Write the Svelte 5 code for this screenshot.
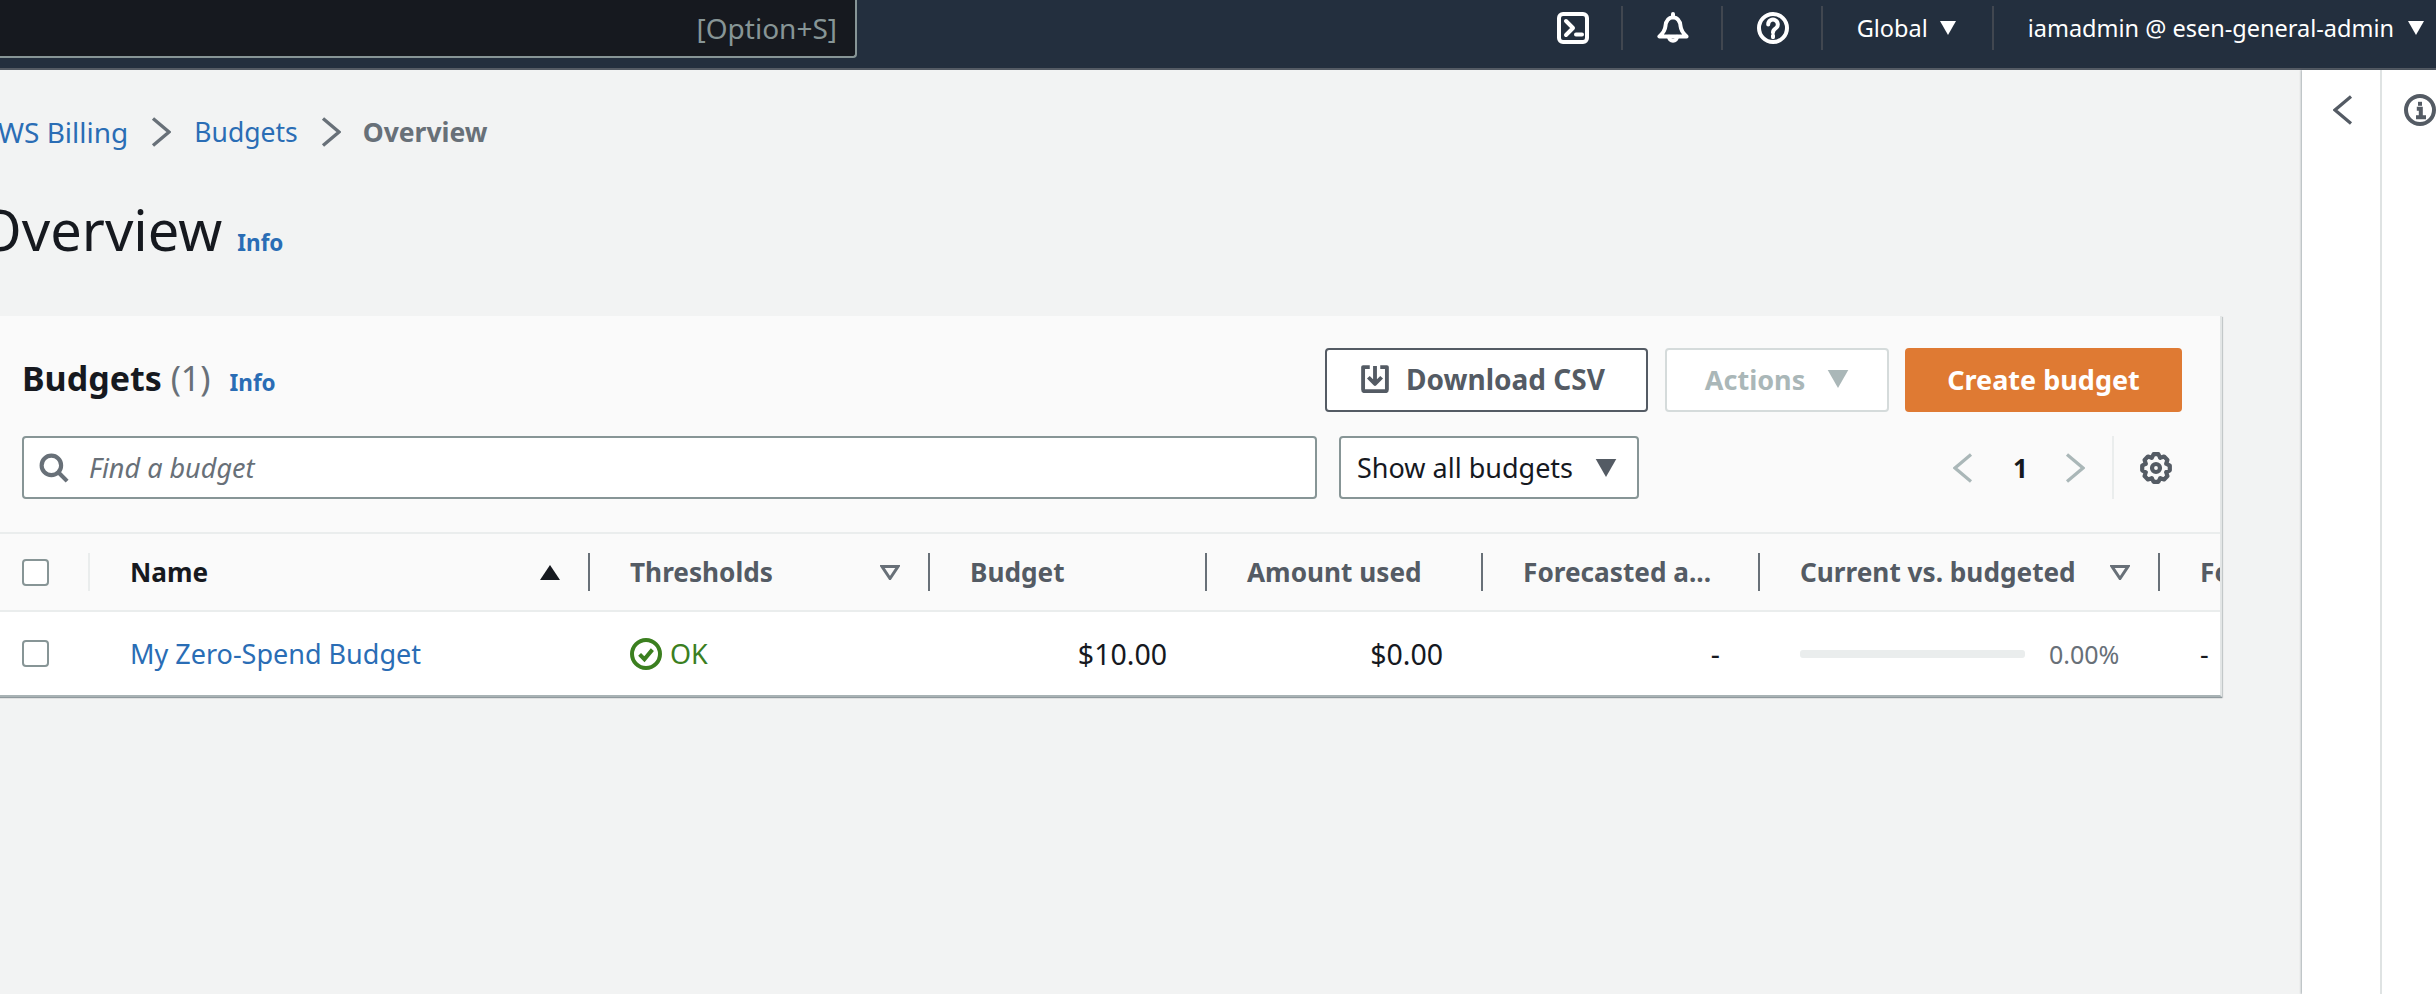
<script>
  const teeth = 8;
  const pts = [];
  for (let i = 0; i < teeth; i++) {
    const c = (i / teeth) * Math.PI * 2 - Math.PI / 2;
    const w = 0.2;
    const add = (a, r) => pts.push((8 + r * Math.cos(a)).toFixed(2) + ' ' + (8 + r * Math.sin(a)).toFixed(2));
    add(c - 0.2 - w, 5.5);
    add(c - w + 0.03, 7);
    add(c + w - 0.03, 7);
    add(c + 0.2 + w, 5.5);
  }
  const gear = 'M' + pts.join('L') + 'Z';

  const headers = [
    { label: 'Name', strong: true, sort: 'up' },
    { label: 'Thresholds', sort: 'down' },
    { label: 'Budget' },
    { label: 'Amount used' },
    { label: 'Forecasted a...' },
    { label: 'Current vs. budgeted', sort: 'down' },
    { label: 'Forecasted vs. budgeted' }
  ];
</script>

<div class="page">
  <header class="top">
    <div class="search"><span>[Option+S]</span></div>
    <div class="nav">
      <div class="nav-icon">
        <svg viewBox="0 0 16 16" class="i32 wh"><rect x="1" y="1" width="14" height="14" rx="2"/><path d="M4.5 4.5 8 8l-3.5 3.5M9.5 11.2h3"/></svg>
      </div>
      <div class="nav-icon">
        <svg viewBox="0 0 16 16" class="i32 wh"><path d="M8 1V2.6C5.6 2.8 4.4 4.8 4.2 7.2 4 9.4 2.8 10.8 1.2 12.2H14.8C13.2 10.8 12 9.4 11.8 7.2 11.6 4.8 10.4 2.8 8 2.6"/><path d="M6 12.4a2 2 0 0 0 4 0"/></svg>
      </div>
      <div class="nav-icon">
        <svg viewBox="0 0 16 16" class="i32 wh"><circle cx="8" cy="8" r="7"/><path d="M5.6 6.2a2.4 2.4 0 1 1 3.7 2C8.4 8.8 8 9.2 8 10.2M8 11.8v.8"/></svg>
      </div>
      <div class="nav-text region">
        <span>Global</span>
        <svg viewBox="0 0 16 14" class="caret-w"><path d="M0 0h16L8 14z"/></svg>
      </div>
      <div class="nav-text user">
        <span>iamadmin @ esen-general-admin</span>
        <svg viewBox="0 0 16 14" class="caret-w"><path d="M0 0h16L8 14z"/></svg>
      </div>
    </div>
  </header>

  <div class="body">
    <main class="content">
      <nav class="crumbs">
        <a class="first">AWS Billing</a>
        <svg viewBox="0 0 20 30" class="sep"><path d="M2 1.5 18 15 2 28.5"/></svg>
        <a>Budgets</a>
        <svg viewBox="0 0 20 30" class="sep"><path d="M2 1.5 18 15 2 28.5"/></svg>
        <span class="current">Overview</span>
      </nav>

      <div class="title">
        <h1>Overview</h1>
        <a class="info">Info</a>
      </div>

      <section class="card">
        <div class="card-head">
          <div class="row-one">
            <h2>Budgets <span class="count">(1)</span></h2>
            <a class="info">Info</a>
            <div class="actions">
              <button class="btn normal">
                <svg viewBox="0 0 16 16" class="dl"><path d="M5 1.2H1.2V14a1 1 0 0 0 1 1h11.6a1 1 0 0 0 1-1V1.2H11"/><path d="M8 .5v10M4.2 7 8 10.8 11.8 7"/></svg>
                Download CSV
              </button>
              <button class="btn disabled">
                Actions
                <svg viewBox="0 0 16 14" class="caret-d"><path d="M0 0h16L8 14z"/></svg>
              </button>
              <button class="btn primary">Create budget</button>
            </div>
          </div>
          <div class="row-two">
            <div class="find">
              <svg viewBox="0 0 16 16" class="mag"><circle cx="6.6" cy="6.6" r="5.2"/><path d="M10.4 10.4 15 15"/></svg>
              <span>Find a budget</span>
            </div>
            <div class="select">
              <span>Show all budgets</span>
              <svg viewBox="0 0 16 14" class="caret-s"><path d="M0 0h16L8 14z"/></svg>
            </div>
            <div class="pager">
              <svg viewBox="0 0 20 30" class="pg"><path d="M18 1.5 2 15 18 28.5"/></svg>
              <span class="num">1</span>
              <svg viewBox="0 0 20 30" class="pg"><path d="M2 1.5 18 15 2 28.5"/></svg>
            </div>
            <div class="prefs">
              <svg viewBox="0 0 16 16" class="gear"><path d={gear}/><circle cx="8" cy="8" r="2"/></svg>
            </div>
          </div>
        </div>

        <div class="grid thead">
          <div class="cell first-cell"><span class="check"></span></div>
          {#each headers as h, i}
            <div class="cell">
              <div class="th" class:light={i === 0} class:strong={h.strong}>
                <span class="th-label">{h.label}</span>
                {#if h.sort === 'up'}
                  <svg viewBox="0 0 20 15" class="sort-up"><path d="M10 0 20 15H0z"/></svg>
                {:else if h.sort === 'down'}
                  <svg viewBox="0 0 20 15" class="sort-down"><path d="M2 1.5h16L10 13.5z"/></svg>
                {/if}
              </div>
            </div>
          {/each}
        </div>

        <div class="grid tbody">
          <div class="cell first-cell"><span class="check"></span></div>
          <div class="cell td"><a class="link">My Zero-Spend Budget</a></div>
          <div class="cell td ok">
            <svg viewBox="0 0 16 16" class="okicon"><circle cx="8" cy="8" r="7"/><path d="M4.8 8.2 7.2 10.6 11.2 5.8"/></svg>
            <span>OK</span>
          </div>
          <div class="cell td num-cell">$10.00</div>
          <div class="cell td num-cell">$0.00</div>
          <div class="cell td num-cell">-</div>
          <div class="cell td progress">
            <div class="bar"></div>
            <span class="pct">0.00%</span>
          </div>
          <div class="cell td">-</div>
        </div>
      </section>
    </main>

    <aside class="panel">
      <div class="panel-col">
        <svg viewBox="0 0 20 30" class="back"><path d="M18 1.5 2 15 18 28.5"/></svg>
      </div>
      <div class="panel-col right">
        <svg viewBox="0 0 16 16" class="infoicon"><circle cx="8" cy="8" r="7"/><path class="dot" d="M8 3.9v2"/><path class="stem" d="M6.4 7.4H8.4V11.4M6 11.6h5"/></svg>
      </div>
    </aside>
  </div>
</div>

<style>
  :global(body) {
    margin: 0;
    background: #f2f3f3;
    overflow: hidden;
  }

  .page {
    width: 2436px;
    height: 994px;
    display: flex;
    flex-direction: column;
    overflow: hidden;
    font-family: "Noto Sans", "Open Sans", sans-serif;
    font-size: 26.5px;
    color: #16191f;
  }

  svg {
    display: block;
    flex: none;
  }

  /* top bar */
  .top {
    height: 68px;
    flex: none;
    background: #232f3e;
    border-bottom: 2px solid #545b64;
    display: flex;
    align-items: flex-start;
  }

  .search {
    box-sizing: border-box;
    width: 857px;
    height: 58px;
    background: #16191f;
    border: 2px solid #879596;
    border-top: none;
    border-left: none;
    border-radius: 0 0 4px 0;
    display: flex;
    align-items: center;
    justify-content: flex-end;
    padding: 0 18px 0 0;
    color: #879596;
    font-size: 28px;
  }

  .nav {
    margin-left: 1px;
    flex: 1;
    height: 68px;
    display: flex;
    justify-content: flex-end;
    padding-right: 12px;
  }

  .nav-icon {
    box-sizing: border-box;
    width: 100px;
    margin: 6px 0 18px;
    height: 44px;
    padding-left: 3px;
    display: flex;
    align-items: center;
    justify-content: center;
    border-right: 2px solid #414750;
  }

  .i32 {
    width: 32px;
    height: 32px;
  }

  .wh {
    fill: none;
    stroke: #fff;
    stroke-width: 2;
    stroke-linejoin: round;
    stroke-linecap: round;
  }

  .nav-text {
    box-sizing: border-box;
    margin: 6px 0 18px;
    height: 44px;
    display: flex;
    align-items: center;
    color: #fff;
    font-size: 23.5px;
  }

  .region {
    width: 171px;
    padding-left: 34px;
    gap: 12px;
    border-right: 2px solid #414750;
  }

  .user {
    padding-left: 34px;
    gap: 14px;
  }

  .caret-w {
    width: 16px;
    height: 14px;
    fill: #fff;
  }

  /* main layout */
  .body {
    flex: 1;
    display: flex;
    min-height: 0;
  }

  .content {
    flex: 1;
    min-width: 0;
    overflow: hidden;
  }

  .crumbs {
    display: flex;
    align-items: center;
    height: 34px;
    margin: 45px 0 0 -18.8px;
    gap: 23px;
  }

  a {
    color: #2a6db5;
  }

  .crumbs .first {
    font-size: 28px;
  }

  .crumbs .current {
    color: #687078;
    font-weight: 700;
    margin-left: -1px;
  }

  .sep {
    width: 20px;
    height: 30px;
    fill: none;
    stroke: #687078;
    stroke-width: 3.4;
  }

  .title {
    display: flex;
    align-items: baseline;
    gap: 15px;
    margin: 44px 0 0 -22px;
  }

  h1 {
    margin: 0;
    font-size: 56px;
    font-weight: 400;
    line-height: 72px;
  }

  .info {
    font-size: 22.5px;
    font-weight: 700;
  }

  .card {
    box-sizing: border-box;
    margin: 51px 0 0 -21px;
    width: 2243px;
    height: 381px;
    overflow: hidden;
    background: #fafafa;
    box-shadow: 0 1px 1px rgba(0, 28, 36, 0.3), 1px 1px 1px rgba(0, 28, 36, 0.15);
    border-bottom: 2px solid #a9b3b5;
    border-right: 2px solid #e3e6e6;
  }

  .card-head {
    padding: 32px 0 0 43px;
    height: 216px;
    box-sizing: border-box;
  }

  .row-one {
    display: flex;
    align-items: baseline;
    gap: 19px;
    height: 64px;
  }

  h2 {
    margin: 7px 0 0;
    font-size: 34px;
    font-weight: 700;
  }

  .count {
    color: #687078;
    font-weight: 400;
  }

  .actions {
    margin-left: auto;
    margin-right: 38px;
    display: flex;
    gap: 16px;
    align-self: flex-start;
  }

  .btn {
    box-sizing: border-box;
    height: 64px;
    font: inherit;
    font-weight: 700;
    font-size: 27px;
    border-radius: 4px;
    display: flex;
    align-items: center;
    justify-content: center;
    padding: 0 0 2px;
    background: #fff;
  }

  .normal {
    width: 323px;
    margin-right: 1px;
    gap: 17px;
    padding-right: 7px;
    border: 2px solid #545b64;
    color: #545b64;
    font-size: 28px;
  }

  .dl {
    width: 28px;
    height: 28px;
    fill: none;
    stroke: #545b64;
    stroke-width: 2.2;
    stroke-linejoin: round;
  }

  .disabled {
    width: 224px;
    gap: 22px;
    border: 2px solid #d5dbdb;
    color: #aab7b8;
  }

  .caret-d {
    width: 22px;
    height: 18px;
    fill: #aab7b8;
  }

  .primary {
    width: 277px;
    border: none;
    background: #df7a33;
    color: #fff;
  }

  .row-two {
    display: flex;
    margin-top: 24px;
    height: 63px;
  }

  .find {
    box-sizing: border-box;
    width: 1295px;
    background: #fff;
    border: 2px solid #879596;
    border-radius: 4px;
    display: flex;
    align-items: center;
    padding-left: 15px;
    gap: 20px;
    color: #687078;
    font-style: italic;
    font-size: 27px;
  }

  .mag {
    width: 30px;
    height: 30px;
    fill: none;
    stroke: #687078;
    stroke-width: 2.2;
  }

  .select {
    box-sizing: border-box;
    width: 300px;
    margin-left: 22px;
    background: #fff;
    border: 2px solid #879596;
    border-radius: 4px;
    display: flex;
    align-items: center;
    justify-content: space-between;
    padding: 0 20px 0 16px;
    font-size: 27px;
  }

  .caret-s {
    width: 22px;
    height: 18px;
    fill: #545b64;
  }

  .pager {
    margin-left: 314px;
    display: flex;
    align-items: center;
    gap: 40px;
  }

  .pg {
    width: 20px;
    height: 30px;
    fill: none;
    stroke: #aab7b8;
    stroke-width: 3.2;
  }

  .num {
    font-weight: 700;
    font-size: 26px;
    width: 12px;
    text-align: center;
  }

  .prefs {
    margin-left: 27px;
    border-left: 2px solid #eaeded;
    padding-left: 26px;
    display: flex;
    align-items: center;
  }

  .gear {
    width: 32px;
    height: 32px;
    fill: none;
    stroke: #545b64;
    stroke-width: 2.1;
    stroke-linejoin: round;
  }

  .grid {
    display: grid;
    grid-template-columns: 109px 500px 340px 277px 276px 277px 400px 200px;
    width: 2379px;
  }

  .thead {
    box-sizing: border-box;
    height: 80px;
    border-top: 2px solid #eaeded;
    border-bottom: 2px solid #eaeded;
    background: #fafafa;
  }

  .tbody {
    height: 83px;
    background: #fff;
  }

  .cell {
    display: flex;
    align-items: center;
    min-width: 0;
  }

  .first-cell {
    padding-left: 43px;
  }

  .check {
    box-sizing: border-box;
    width: 27px;
    height: 27px;
    background: #fff;
    border: 2px solid #879596;
    border-radius: 4px;
    display: block;
  }

  .th {
    box-sizing: border-box;
    flex: 1;
    height: 38px;
    min-width: 0;
    border-left: 2px solid #687078;
    padding: 0 28px 0 40px;
    display: flex;
    align-items: center;
    justify-content: space-between;
    font-size: 26.2px;
    font-weight: 700;
    color: #545b64;
  }

  .th.light {
    border-left-color: #eaeded;
  }

  .th.strong {
    color: #16191f;
  }

  .th-label {
    white-space: nowrap;
  }

  .sort-up {
    width: 20px;
    height: 15px;
    fill: #16191f;
  }

  .sort-down {
    width: 20px;
    height: 15px;
    fill: none;
    stroke: #687078;
    stroke-width: 3;
  }

  .td {
    padding-left: 42px;
    font-size: 27px;
    white-space: nowrap;
  }

  .link {
    color: #2a6db5;
  }

  .ok {
    color: #3b7f1f;
    gap: 8px;
  }

  .okicon {
    width: 32px;
    height: 32px;
    fill: none;
    stroke: #3b7f1f;
    stroke-width: 2;
  }

  .num-cell {
    justify-content: flex-end;
    padding: 0 38px 0 0;
    font-size: 28.5px;
  }

  .progress {
    gap: 24px;
  }

  .bar {
    width: 225px;
    height: 8px;
    background: #eaeded;
    border-radius: 3px;
    flex: none;
  }

  .pct {
    color: #687078;
    font-size: 25px;
  }

  /* side panel */
  .panel {
    flex: none;
    width: 134px;
    background: #fff;
    display: flex;
    box-shadow: -1px 0 2px rgba(0, 28, 36, 0.3);
  }

  .panel-col {
    box-sizing: border-box;
    width: 80px;
    padding: 25px 0 0 31px;
    border-right: 2px solid #dfe3e3;
  }

  .panel-col.right {
    flex: 1;
    width: auto;
    border: none;
    padding: 24px 0 0 22px;
    overflow: hidden;
  }

  .back {
    width: 20px;
    height: 30px;
    fill: none;
    stroke: #545b64;
    stroke-width: 3.2;
  }

  .infoicon {
    width: 32px;
    height: 32px;
    fill: none;
    stroke: #545b64;
    stroke-width: 2;
  }
</style>
